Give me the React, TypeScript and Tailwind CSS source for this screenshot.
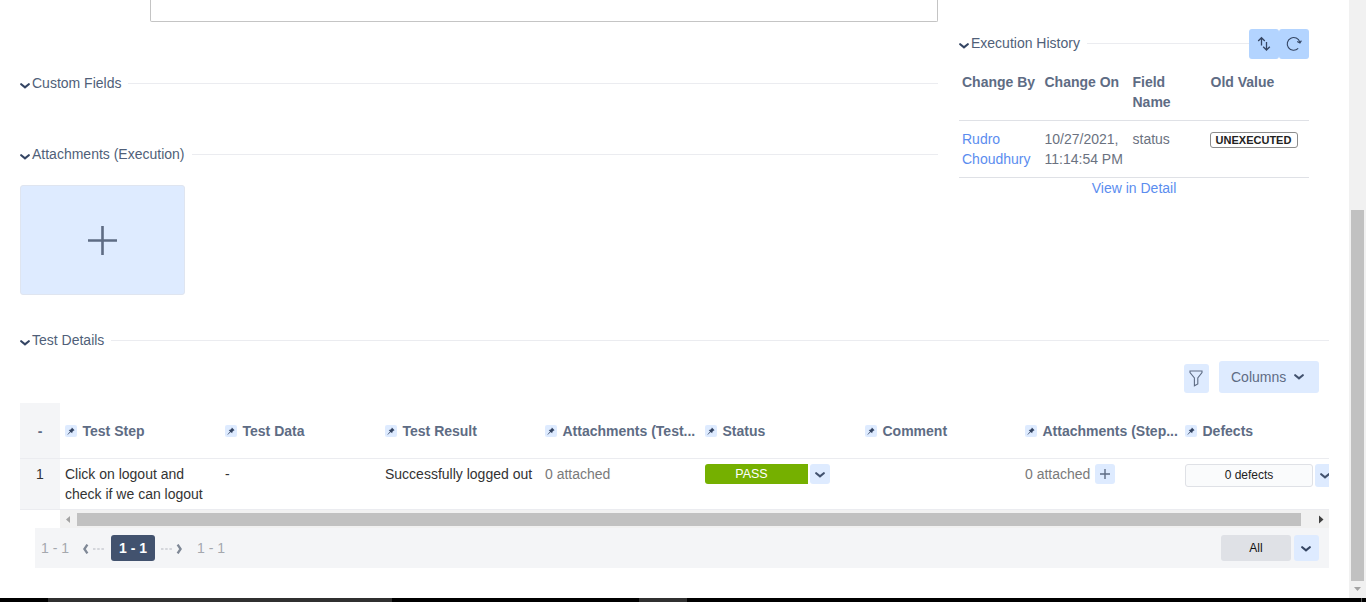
import React from "react";

function Chevron({ className = "" }: { className?: string }) {
  return (
    <svg viewBox="0 0 10 6" width="10" height="6" fill="none" stroke="currentColor" strokeWidth="2.1" strokeLinecap="round" className={`shrink-0 ${className}`}>
      <path d="M1.2 1.2 L5 4.4 L8.8 1.2" />
    </svg>
  );
}

function Plus({ size, width }: { size: number; width: number }) {
  return (
    <svg viewBox={`0 0 ${size} ${size}`} width={size} height={size} stroke="currentColor" strokeWidth={width} className="shrink-0">
      <path d={`M${size / 2} 0 V${size} M0 ${size / 2} H${size}`} />
    </svg>
  );
}

function Pin() {
  return (
    <span className="flex h-3 w-3 shrink-0 items-center justify-center rounded-xs bg-[#deebff] text-[#344563]">
      <svg viewBox="0 0 8 8" width="8" height="8" fill="currentColor">
        <path d="M4.9 0.6 L7.6 3.2 L6.8 3.5 L5.4 4.7 L5.2 6.3 L3.7 5 L0.7 7.7 L0.4 7.4 L3.1 4.4 L1.7 2.9 L3.3 2.7 L4.6 1.5 Z" />
      </svg>
    </span>
  );
}

function SectionHeader({ title }: { title: string }) {
  return (
    <div className="flex h-5 grow items-center text-[#505f79]">
      <Chevron className="mt-[6px] mr-[3px] text-[#344563]" />
      <span className="-ml-px whitespace-nowrap">{title}</span>
      <div className="ml-[7px] h-px grow bg-[#ebecf0]" />
    </div>
  );
}

const columns = [
  "Test Step",
  "Test Data",
  "Test Result",
  "Attachments (Test...",
  "Status",
  "Comment",
  "Attachments (Step...",
  "Defects",
];

function History() {
  return (
    <section className="mt-[29px] ml-[21px] w-[350px]">
      <div className="flex h-[30px] items-start">
        <div className="flex grow pt-1"><SectionHeader title="Execution History" /></div>
        <button className="flex h-[30px] w-[30px] items-center justify-center rounded-[3px] bg-[#b3d4ff] text-[#344563]">
          <svg viewBox="0 0 14 16" width="14" height="16" fill="none" stroke="currentColor" strokeWidth="1.3">
            <path d="M4.5 9.5 V2 M1.2 5 L4.5 1.7 L7.8 5 M9.5 6 V13.6 M6.2 10.7 L9.5 14 L12.8 10.7" />
          </svg>
        </button>
        <button className="flex h-[30px] w-[30px] items-center justify-center rounded-[3px] bg-[#b3d4ff] text-[#344563]">
          <svg viewBox="0 0 16 16" width="16" height="16" fill="none" stroke="currentColor" strokeWidth="1.1">
            <path d="M12.2 12.4 A6.4 6.4 0 1 1 13.8 6.2 M11.2 5.6 L13.9 7 L15.4 4.6" />
          </svg>
        </button>
      </div>
      <div className="grid h-[62px] grid-cols-[82.5px_88px_78px_1fr] border-b border-[#dfe1e6] pt-[13px] pl-[3px] leading-5 font-bold text-[#5e6c84]">
        <span>Change By</span>
        <span>Change On</span>
        <span className="w-12">Field Name</span>
        <span>Old Value</span>
      </div>
      <div className="grid h-[57px] grid-cols-[82.5px_88px_77px_1fr] border-b border-[#dfe1e6] pt-2 pl-[3px] leading-5 text-[#6b7280]">
        <a className="w-[75px] text-[#5b8def]">Rudro Choudhury</a>
        <span className="whitespace-nowrap">10/27/2021,<br />11:14:54 PM</span>
        <span>status</span>
        <span className="mt-[3px] flex h-4 w-[88px] items-center justify-center rounded-[3px] border border-[#8c8c8c] text-[11px] leading-3 font-bold text-[#222]">UNEXECUTED</span>
      </div>
      <div className="text-center leading-5 text-[#5b8def]">View in Detail</div>
    </section>
  );
}

function StepTable() {
  return (
    <div className="ml-5 w-[1309px] overflow-hidden">
      <div className="mt-[10px] flex h-14 border-b border-[#ebecf0] font-bold text-[#5e6c84]">
        <div className="flex w-10 shrink-0 items-center justify-center bg-[#f4f5f7]">-</div>
        {columns.map((name) => (
          <div key={name} className="flex w-40 shrink-0 items-center gap-[5.5px] pl-[5px] whitespace-nowrap">
            <Pin />
            <span>{name}</span>
          </div>
        ))}
      </div>
      <div className="flex h-[51px] border-b border-[#ebecf0] leading-5 text-[#333]">
        <div className="w-10 shrink-0 bg-[#f4f5f7] pt-[5px] text-center">1</div>
        <div className="w-40 shrink-0 pt-[5px] pl-[5px] whitespace-nowrap">Click on logout and<br />check if we can logout</div>
        <div className="w-40 shrink-0 pt-[5px] pl-[5px]">-</div>
        <div className="w-40 shrink-0 pt-[5px] pl-[5px] whitespace-nowrap">Successfully logged out</div>
        <div className="w-40 shrink-0 pt-[5px] pl-[5px] text-[#7a7a7a]">0 attached</div>
        <div className="flex w-40 shrink-0 gap-[2px] pt-[5px] pl-[5px]">
          <div className="h-5 w-[103px] rounded-l-[3px] bg-[#75b000] pr-[10px] text-center text-[12.5px] text-white">PASS</div>
          <button className="flex h-5 w-5 items-center justify-center rounded-[3px] bg-[#deebff] text-[#42526e]"><Chevron className="mt-px" /></button>
        </div>
        <div className="w-40 shrink-0" />
        <div className="flex w-40 shrink-0 gap-[5px] pt-[5px] pl-[5px] text-[#7a7a7a]">
          <span>0 attached</span>
          <button className="flex h-5 w-5 items-center justify-center rounded-[3px] bg-[#deebff] text-[#5e6c84]"><Plus size={10} width={1.4} /></button>
        </div>
        <div className="flex w-40 shrink-0 gap-[2px] pt-[5px] pl-[5px]">
          <div className="h-[23px] w-32 shrink-0 rounded-[3px] border border-[#dfe1e6] bg-[#fafbfc] text-center text-xs leading-[21px] text-[#222]">0 defects</div>
          <button className="flex h-[23px] w-5 shrink-0 items-center justify-center rounded-[3px] bg-[#deebff] text-[#42526e]"><Chevron /></button>
        </div>
      </div>
      <div className="ml-10 flex h-[18px] items-center bg-[#f1f1f1] pt-px">
        <svg viewBox="0 0 17 17" width="17" height="17" className="shrink-0 fill-[#a3a3a3]"><path d="M10 5 V12 L6 8.5 Z" /></svg>
        <div className="h-[13px] w-[1224px] shrink-0 bg-[#c1c1c1]" />
        <svg viewBox="0 0 17 17" width="17" height="17" className="ml-[11px] shrink-0 fill-[#404040]"><path d="M7 4.5 V12.5 L11.5 8.5 Z" /></svg>
      </div>
    </div>
  );
}

function Dots({ className }: { className: string }) {
  return (
    <svg viewBox="0 0 11 2" width="11" height="2" fill="#b3b7bf" className={className}>
      <path d="M0 0.5h2.5v1H0z M4.2 0.5h2.5v1H4.2z M8.4 0.5h2.5v1H8.4z" />
    </svg>
  );
}

function Pager() {
  return (
    <div className="ml-[35px] flex h-10 w-[1294px] items-center bg-[#f4f5f7] pr-[10px] pl-[6px] text-[#a5a8ae]">
      <span className="w-[41px]">1 - 1</span>
      <svg viewBox="0 0 7 10" width="7" height="10" fill="none" stroke="#7f8896" strokeWidth="2.3" className="mt-[2px]"><path d="M5.4 0.6 L2.4 5 L5.4 9.4" /></svg>
      <Dots className="ml-1 mt-px" />
      <div className="ml-[7px] flex h-[26px] w-11 items-center justify-center rounded-[3px] bg-[#42526e] font-bold text-white">1 - 1</div>
      <Dots className="ml-[6px] mt-px" />
      <svg viewBox="0 0 7 10" width="7" height="10" fill="none" stroke="#7f8896" strokeWidth="2.3" className="mt-[2px] ml-1"><path d="M1.6 0.6 L4.6 5 L1.6 9.4" /></svg>
      <span className="ml-[14px]">1 - 1</span>
      <div className="ml-auto flex h-[26px] w-[70px] items-center justify-center rounded-[3px] bg-[#dfe1e6] text-xs text-[#111]">All</div>
      <button className="ml-[3px] flex h-[26px] w-[25px] items-center justify-center rounded-[3px] bg-[#deebff] pr-px text-[#344563]"><Chevron className="mt-px" /></button>
    </div>
  );
}

export default function App() {
  return (
    <div className="flex h-[602px] w-[1366px] flex-col overflow-hidden bg-white font-['Liberation_Sans',Arial,sans-serif] text-sm leading-5">
      <div className="flex h-[598px]">
        <main className="w-[1349px]">
          <div className="flex h-[330px]">
            <div className="ml-5 w-[918px]">
              <div className="ml-[130px] h-[22px] w-[788px] rounded-b-[2px] border border-t-0 border-[#c4c4c4]" />
              <div className="mt-[51px] flex"><SectionHeader title="Custom Fields" /></div>
              <div className="mt-[51px] flex"><SectionHeader title="Attachments (Execution)" /></div>
              <button className="mt-[21px] flex h-[110px] w-[165px] items-center justify-center rounded-[3px] border border-[#dfe5f0] bg-[#deebff] text-[#5e6c84]">
                <Plus size={29} width={2.6} />
              </button>
            </div>
            <History />
          </div>
          <div className="ml-5 flex w-[1309px]"><SectionHeader title="Test Details" /></div>
          <div className="flex h-[43px] items-end justify-end gap-[10px] pr-[30px]">
            <button className="flex h-[29px] w-[25px] items-center justify-center rounded-[3px] bg-[#deebff] pr-[2px] text-[#5e6c84]">
              <svg viewBox="0 0 14 17" width="14" height="17" fill="none" stroke="currentColor" strokeWidth="1.1">
                <path d="M1 1 H13 V2.6 L8.8 8 V14 L5.4 15.8 V8 L1 2.6 Z" />
              </svg>
            </button>
            <button className="flex h-8 w-[100px] items-center gap-2 rounded-[3px] bg-[#deebff] pl-3 text-[#5e6c84]">
              Columns<Chevron className="text-[#42526e]" />
            </button>
          </div>
          <StepTable />
          <Pager />
        </main>
        <div className="flex w-[17px] flex-col items-center bg-[#f1f1f1] pt-[210px]">
          <div className="-ml-px h-[371px] w-[13px] shrink-0 bg-[#c1c1c1]" />
          <svg viewBox="0 0 17 17" width="17" height="17" className="shrink-0 fill-[#a3a3a3]"><path d="M5 6 H12 L8.5 10 Z" /></svg>
        </div>
      </div>
      <div className="flex h-1 bg-black">
        <div className="ml-12 w-[344px] bg-[#303030]" />
        <div className="ml-[247px] w-12 bg-[#303030]" />
        <div className="ml-[674px] w-px bg-[#555]" />
      </div>
    </div>
  );
}
